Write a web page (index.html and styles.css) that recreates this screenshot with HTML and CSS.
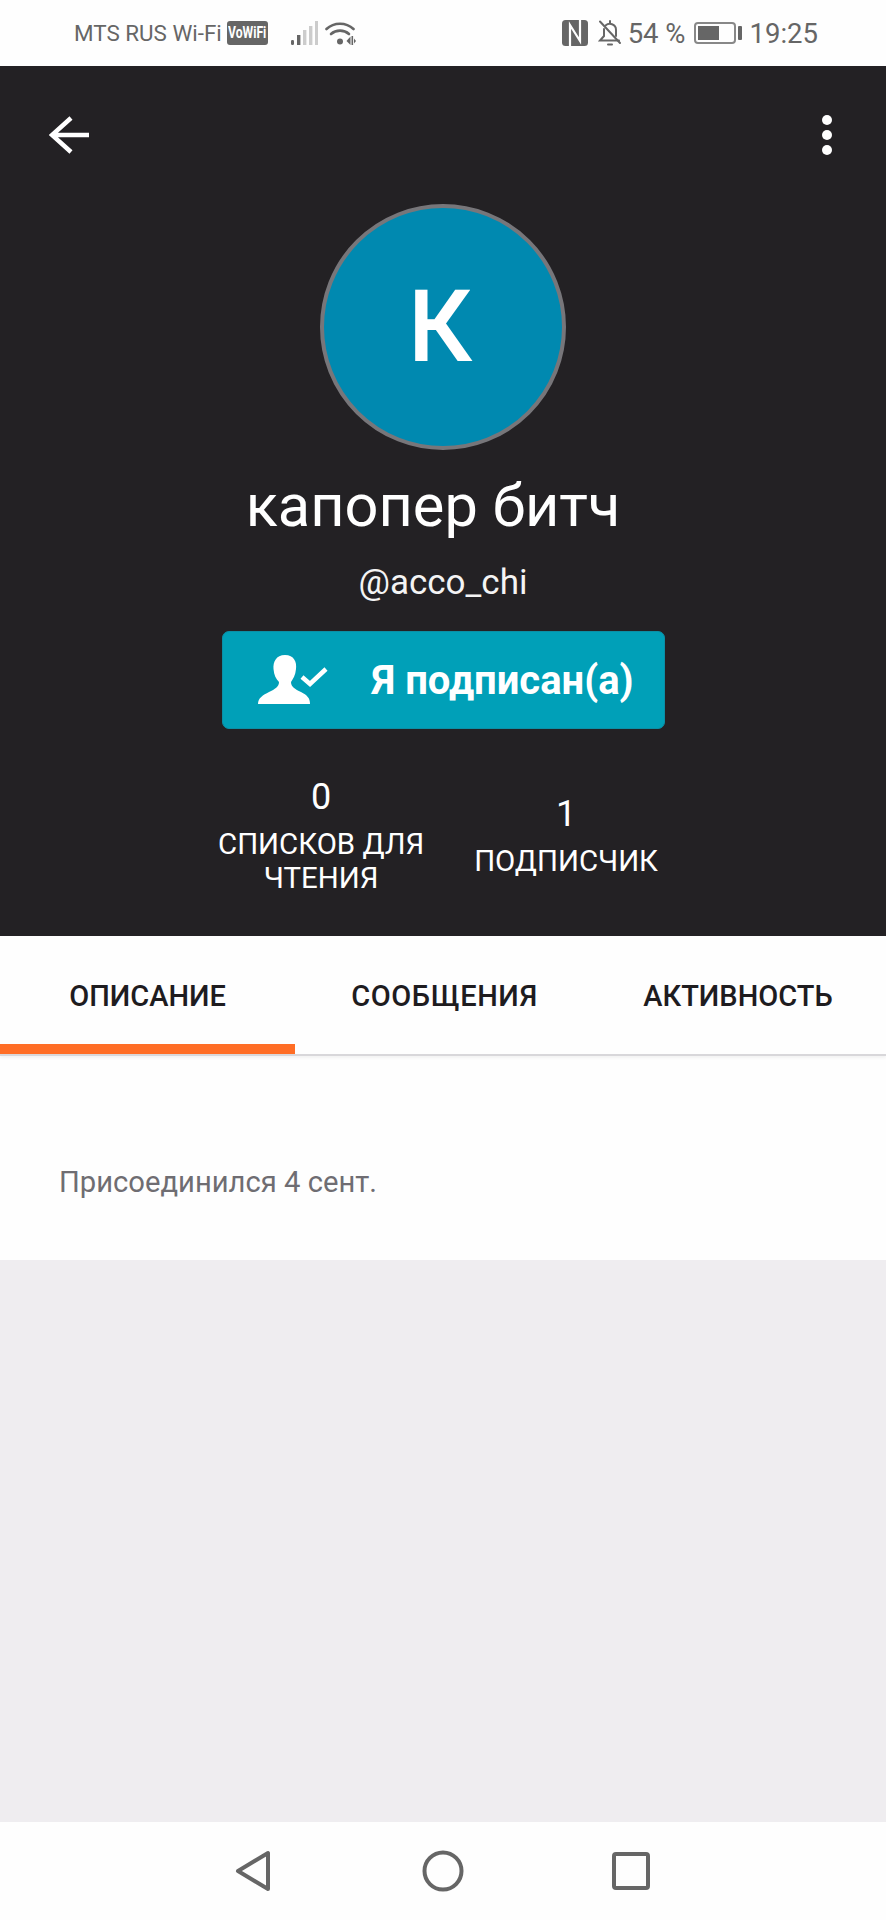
FILE: index.html
```html
<!DOCTYPE html>
<html lang="ru">
<head>
<meta charset="utf-8">
<title>Профиль</title>
<link rel="stylesheet" href="styles.css">
</head>
<body>
<div class="screen">
  <header class="status">
    <div class="status-left">
      <span class="carrier">MTS RUS Wi-Fi</span>
      <span class="vowifi"><span class="vowifi-text">VoWiFi</span></span>
      <svg class="signal" width="27" height="24" viewBox="0 0 27 24">
        <rect x="0" y="19" width="3" height="5" rx="1.2" fill="#666"/>
        <rect x="6" y="14" width="3.4" height="10" fill="#666"/>
        <rect x="12" y="9" width="3.4" height="15" fill="#ccc"/>
        <rect x="18" y="5" width="3.4" height="19" fill="#ccc"/>
        <rect x="24" y="0" width="3" height="24" fill="#ccc"/>
      </svg>
      <svg class="wifi" width="31" height="25" viewBox="0 0 31 25">
        <g fill="none" stroke="#666" stroke-width="2.6" stroke-linecap="round">
          <path d="M1.5 8 C9 1 21 1 28.5 8"/>
          <path d="M6 13 C11 8.5 19 8.5 24 13"/>
        </g>
        <circle cx="15" cy="20.5" r="3" fill="#666"/>
        <path d="M25.5 15.5 L21.5 20 L25.5 24 Z" fill="#666"/>
        <rect x="26.5" y="15" width="1.6" height="9" fill="#666"/>
        <path d="M29 17.5 L31 20 L29 22.5 Z" fill="#666"/>
      </svg>
    </div>
    <div class="status-right">
      <svg class="nfc" width="26" height="26" viewBox="0 0 26 26">
        <rect width="26" height="26" rx="3.5" fill="#666"/>
        <path d="M8 26 V5 L18 21 V0" fill="none" stroke="#fff" stroke-width="2.2"/>
      </svg>
      <svg class="bell" width="24" height="26" viewBox="0 0 24 26">
        <g fill="none" stroke="#666" stroke-width="2" stroke-linecap="round">
          <path d="M6 9 V16 L2 20.5 H21"/>
          <path d="M7.5 5.5 C11 2.5 18 3.5 18 10 V16"/>
          <path d="M2 1.5 L22 23"/>
          <path d="M10 24.5 H14"/>
          <path d="M12 1 V3"/>
        </g>
      </svg>
      <span class="battery-pct">54 %</span>
      <span class="battery"><span class="battery-level"></span></span>
      <span class="battery-tip"></span>
      <span class="clock">19:25</span>
    </div>
  </header>

  <section class="hero">
    <div class="toolbar">
      <svg class="back" width="40" height="38" viewBox="0 0 40 38">
        <path d="M40 19 H3 M22 2 L3 19 L22 36" fill="none" stroke="#fff" stroke-width="4.5"/>
      </svg>
      <div class="more"><i></i><i></i><i></i></div>
    </div>
    <div class="avatar">К</div>
    <h1 class="name">капопер битч</h1>
    <div class="handle">@acco_chi</div>
    <button class="follow">
      <svg class="follow-icon" width="70" height="50" viewBox="0 0 70 50">
        <path d="M27 0 C36 0 39 7 38 14 C37.5 20 35 24 33 27 C33 32 37 34 43 37 C49 40 52 43 52 49 L0 49 C0 43 5 40 11 37 C17 34 21 32 21 27 C18 24 16 20 15.5 14 C15 7 18 0 27 0 Z" fill="#fff"/>
        <path d="M44 22 L52 29 L68 14" fill="none" stroke="#fff" stroke-width="4.5"/>
      </svg>
      <span class="follow-label">Я подписан(а)</span>
    </button>
    <div class="stats">
      <div class="stat">
        <div class="stat-num">0</div>
        <div class="stat-label">СПИСКОВ ДЛЯ<br>ЧТЕНИЯ</div>
      </div>
      <div class="stat">
        <div class="stat-num">1</div>
        <div class="stat-label">ПОДПИСЧИК</div>
      </div>
    </div>
  </section>

  <nav class="tabs">
    <div class="tab tab-active">ОПИСАНИЕ</div>
    <div class="tab tab-mid">СООБЩЕНИЯ</div>
    <div class="tab tab-last">АКТИВНОСТЬ</div>
  </nav>

  <section class="about">Присоединился 4 сент.</section>
  <div class="empty"></div>

  <footer class="navbar">
    <svg width="36" height="42" viewBox="0 0 36 42">
      <path d="M33 3 V39 L3 21 Z" fill="none" stroke="#666" stroke-width="4" stroke-linejoin="round"/>
    </svg>
    <svg class="nav-home" width="42" height="42" viewBox="0 0 42 42">
      <circle cx="21" cy="21" r="18.5" fill="none" stroke="#666" stroke-width="4"/>
    </svg>
    <svg width="38" height="38" viewBox="0 0 38 38">
      <rect x="2" y="2" width="34" height="34" rx="2" fill="none" stroke="#666" stroke-width="4"/>
    </svg>
  </footer>
</div>
</body>
</html>
```

FILE: styles.css
```css
* { box-sizing: border-box; }
html, body { margin: 0; padding: 0; }
body { font-family: Roboto, "Noto Sans", sans-serif; background: #efedf0; }
.screen { width: 886px; height: 1920px; display: flex; flex-direction: column; overflow: hidden; }

.status { height: 66px; flex: none; background: #fefefe; color: #666; display: flex; justify-content: space-between; align-items: center; padding: 0 68px 0 74px; }
.status-left, .status-right { display: flex; align-items: center; }
.carrier { font-size: 22.4px; width: 153px; white-space: nowrap; }
.vowifi { width: 41px; height: 24px; background: #666; border-radius: 3px; color: #fff; display: flex; align-items: center; justify-content: center; overflow: hidden; }
.vowifi-text { display: inline-block; font-size: 16px; font-weight: 700; line-height: 24px; white-space: nowrap; transform: scaleX(.76); }
.signal { margin-left: 23px; }
.wifi { margin-left: 7px; }
.bell { margin-left: 10px; }
.battery-pct { font-size: 27.5px; margin-left: 6px; white-space: nowrap; }
.battery { width: 42px; height: 22px; margin-left: 8px; border: 2px solid #888; border-radius: 4px; padding: 2px; display: block; }
.battery-level { display: block; width: 21px; height: 14px; background: #666; }
.battery-tip { width: 4px; height: 14px; margin-left: 2px; background: #666; border-radius: 1px; }
.clock { font-size: 27.5px; margin-left: 8px; }

.hero { height: 870px; flex: none; background: #232124; color: #fff; display: flex; flex-direction: column; align-items: center; }
.toolbar { width: 100%; height: 138px; padding: 49px 54px 0 49px; display: flex; justify-content: space-between; align-items: flex-start; }
.back { margin-top: 1px; }
.more { display: flex; flex-direction: column; gap: 5px; }
.more i { width: 10px; height: 10px; border-radius: 50%; background: #fff; display: block; }
.avatar { width: 246px; height: 246px; flex: none; border-radius: 50%; background: #0089b0; border: 4px solid #77767a; display: flex; align-items: center; justify-content: center; padding-right: 6px; font-size: 100px; font-weight: 500; line-height: 1; }
.name { margin: 26px 20px 0 0; font-size: 59.5px; font-weight: 400; line-height: 60px; white-space: nowrap; }
.handle { margin-top: 27px; font-size: 35px; line-height: 40px; color: #f4f4f4; }
.follow { margin-top: 28px; width: 443px; height: 98px; flex: none; background: #00a0b8; border: 1px solid #0b8fa6; border-radius: 7px; color: #fff; font-family: inherit; display: flex; align-items: center; padding: 0 0 0 35px; }
.follow-icon { flex: none; margin-right: 44px; }
.follow-label { font-size: 40px; font-weight: 700; white-space: nowrap; }
.stats { margin-top: 39px; margin-right: 10px; display: flex; align-items: center; width: 440px; justify-content: space-between; }
.stat { text-align: center; white-space: nowrap; }
.stat-num { font-size: 36px; line-height: 59px; }
.stat-label { font-size: 29.4px; line-height: 34px; }

.tabs { height: 120px; flex: none; background: #fefefe; display: grid; grid-template-columns: 295px 295px 296px; border-bottom: 2px solid #d8d7da; box-shadow: 0 2px 3px rgba(0,0,0,.05); position: relative; color: #1e1c1f; font-size: 29px; font-weight: 500; }
.tab { display: flex; align-items: center; justify-content: center; padding-top: 2px; white-space: nowrap; }
.tab-active { border-bottom: 10px solid #ff6d25; padding-top: 12px; }
.tab-mid { padding-left: 4px; letter-spacing: .6px; }

.about { height: 204px; flex: none; background: #fefefe; color: #6f6d72; font-size: 29.2px; padding: 108px 0 0 59px; line-height: 36px; }
.empty { flex: 1; background: #efedf0; }

.navbar { height: 98px; flex: none; background: #fefefe; display: flex; align-items: center; padding: 0 236px 0 235px; justify-content: space-between; }
.nav-home { margin-left: 3px; }
```
